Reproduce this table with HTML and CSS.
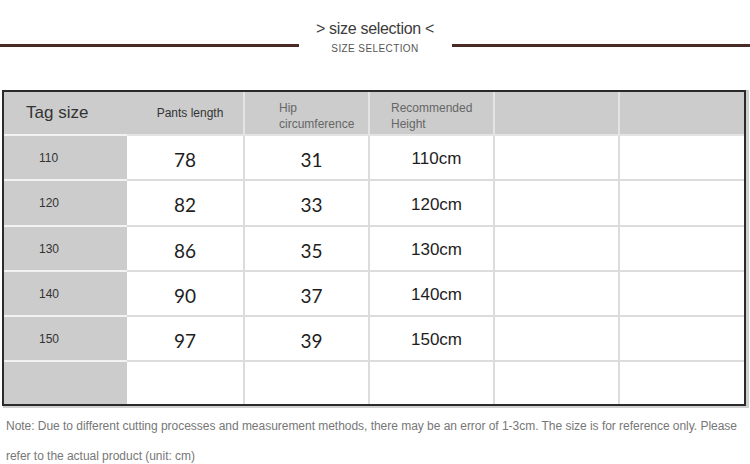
FILE: index.html
```html
<!DOCTYPE html>
<html lang="en">
<head>
<meta charset="utf-8">
<title>Size selection</title>
<link rel="stylesheet" href="styles.css">
</head>
<body>
<header class="heading">
  <div class="rule"></div>
  <div class="heading-text">
    <div class="title">&gt; size selection &lt;</div>
    <div class="subtitle">SIZE SELECTION</div>
  </div>
  <div class="rule"></div>
</header>

<section class="chart">
  <div class="cell head first tag-head">Tag size</div>
  <div class="cell head center">Pants length</div>
  <div class="cell head left hip">Hip<br>circumference</div>
  <div class="cell head left rec">Recommended<br>Height</div>
  <div class="cell head"></div>
  <div class="cell head last"></div>

  <div class="cell first tag">110</div>
  <div class="cell num">78</div>
  <div class="cell num">31</div>
  <div class="cell cm">110cm</div>
  <div class="cell"></div>
  <div class="cell last"></div>

  <div class="cell first tag">120</div>
  <div class="cell num">82</div>
  <div class="cell num">33</div>
  <div class="cell cm">120cm</div>
  <div class="cell"></div>
  <div class="cell last"></div>

  <div class="cell first tag">130</div>
  <div class="cell num">86</div>
  <div class="cell num">35</div>
  <div class="cell cm">130cm</div>
  <div class="cell"></div>
  <div class="cell last"></div>

  <div class="cell first tag">140</div>
  <div class="cell num">90</div>
  <div class="cell num">37</div>
  <div class="cell cm">140cm</div>
  <div class="cell"></div>
  <div class="cell last"></div>

  <div class="cell first tag">150</div>
  <div class="cell num">97</div>
  <div class="cell num">39</div>
  <div class="cell cm">150cm</div>
  <div class="cell"></div>
  <div class="cell last"></div>

  <div class="cell first bottom"></div>
  <div class="cell bottom"></div>
  <div class="cell bottom"></div>
  <div class="cell bottom"></div>
  <div class="cell bottom"></div>
  <div class="cell last bottom"></div>
</section>

<p class="note">Note: Due to different cutting processes and measurement methods, there may be an error of 1-3cm. The size is for reference only. Please refer to the actual product (unit: cm)</p>
</body>
</html>
```

FILE: styles.css
```css
* { box-sizing: border-box; }

html, body {
  margin: 0;
  padding: 0;
  background: #fff;
  width: 750px;
  height: 464px;
  overflow: hidden;
  font-family: "Liberation Sans", Arial, sans-serif;
}

.heading {
  display: flex;
  align-items: flex-start;
  height: 90px;
  padding-top: 19px;
}

.rule {
  flex: 1;
  height: 3px;
  margin-top: 25px;
  background: #4a2a25;
}

.heading-text {
  width: 153px;
  text-align: center;
}

.title {
  font-size: 16px;
  line-height: 20px;
  color: #3c3c3c;
  letter-spacing: -0.3px;
}

.subtitle {
  margin-top: 3px;
  font-size: 10px;
  line-height: 14px;
  color: #555;
  letter-spacing: 0.4px;
}

.chart {
  display: grid;
  grid-template-columns: 123px 118px 125px 125px 125px 124px;
  grid-template-rows: 44px 45px 46px 45px 45px 45px 42px;
  width: 744px;
  margin-left: 2px;
  border: 2px solid #2a2a2a;
  box-shadow: 2px 1px 0 1px #d0d0d0;
}

.cell {
  display: flex;
  align-items: center;
  justify-content: center;
  border-right: 2px solid #dcdcdc;
  border-bottom: 2px solid #dcdcdc;
  background: #fff;
  color: #222;
}

.cell.last { border-right: none; }
.cell.bottom { border-bottom: none; }

.cell.head {
  background: #cccccc;
  border-right-color: #e4e4e4;
  border-bottom-color: #e4e4e4;
  font-size: 12px;
  line-height: 16px;
  color: #333;
}

.cell.first {
  background: #cccccc;
  border-bottom-color: #f2f2f2;
  border-right: none;
}

.tag-head {
  justify-content: flex-start;
  padding-left: 22px;
  font-size: 17px !important;
  color: #333 !important;
}

.cell.left { justify-content: flex-start; color: #666; padding-top: 6px; }
.cell.hip { padding-left: 34px; }
.cell.rec { padding-left: 21px; }
.cell.center { padding-left: 10px; }

.tag {
  justify-content: flex-start;
  padding-left: 35px;
  font-size: 12px;
  color: #333;
}

.num {
  font-family: Lato, "Open Sans", sans-serif;
  font-size: 19px;
  color: #1e1e1e;
  padding-top: 3px;
}

.num:nth-child(6n+3) { padding-left: 10px; }

.cm {
  font-family: "Liberation Sans", Arial, sans-serif;
  font-size: 17px;
  color: #1e1e1e;
  padding-left: 10px;
  padding-top: 3px;
}

.note {
  margin: 5px 0 0 6px;
  width: 740px;
  font-size: 12px;
  line-height: 30px;
  color: #777;
  letter-spacing: -0.03px;
}
```
